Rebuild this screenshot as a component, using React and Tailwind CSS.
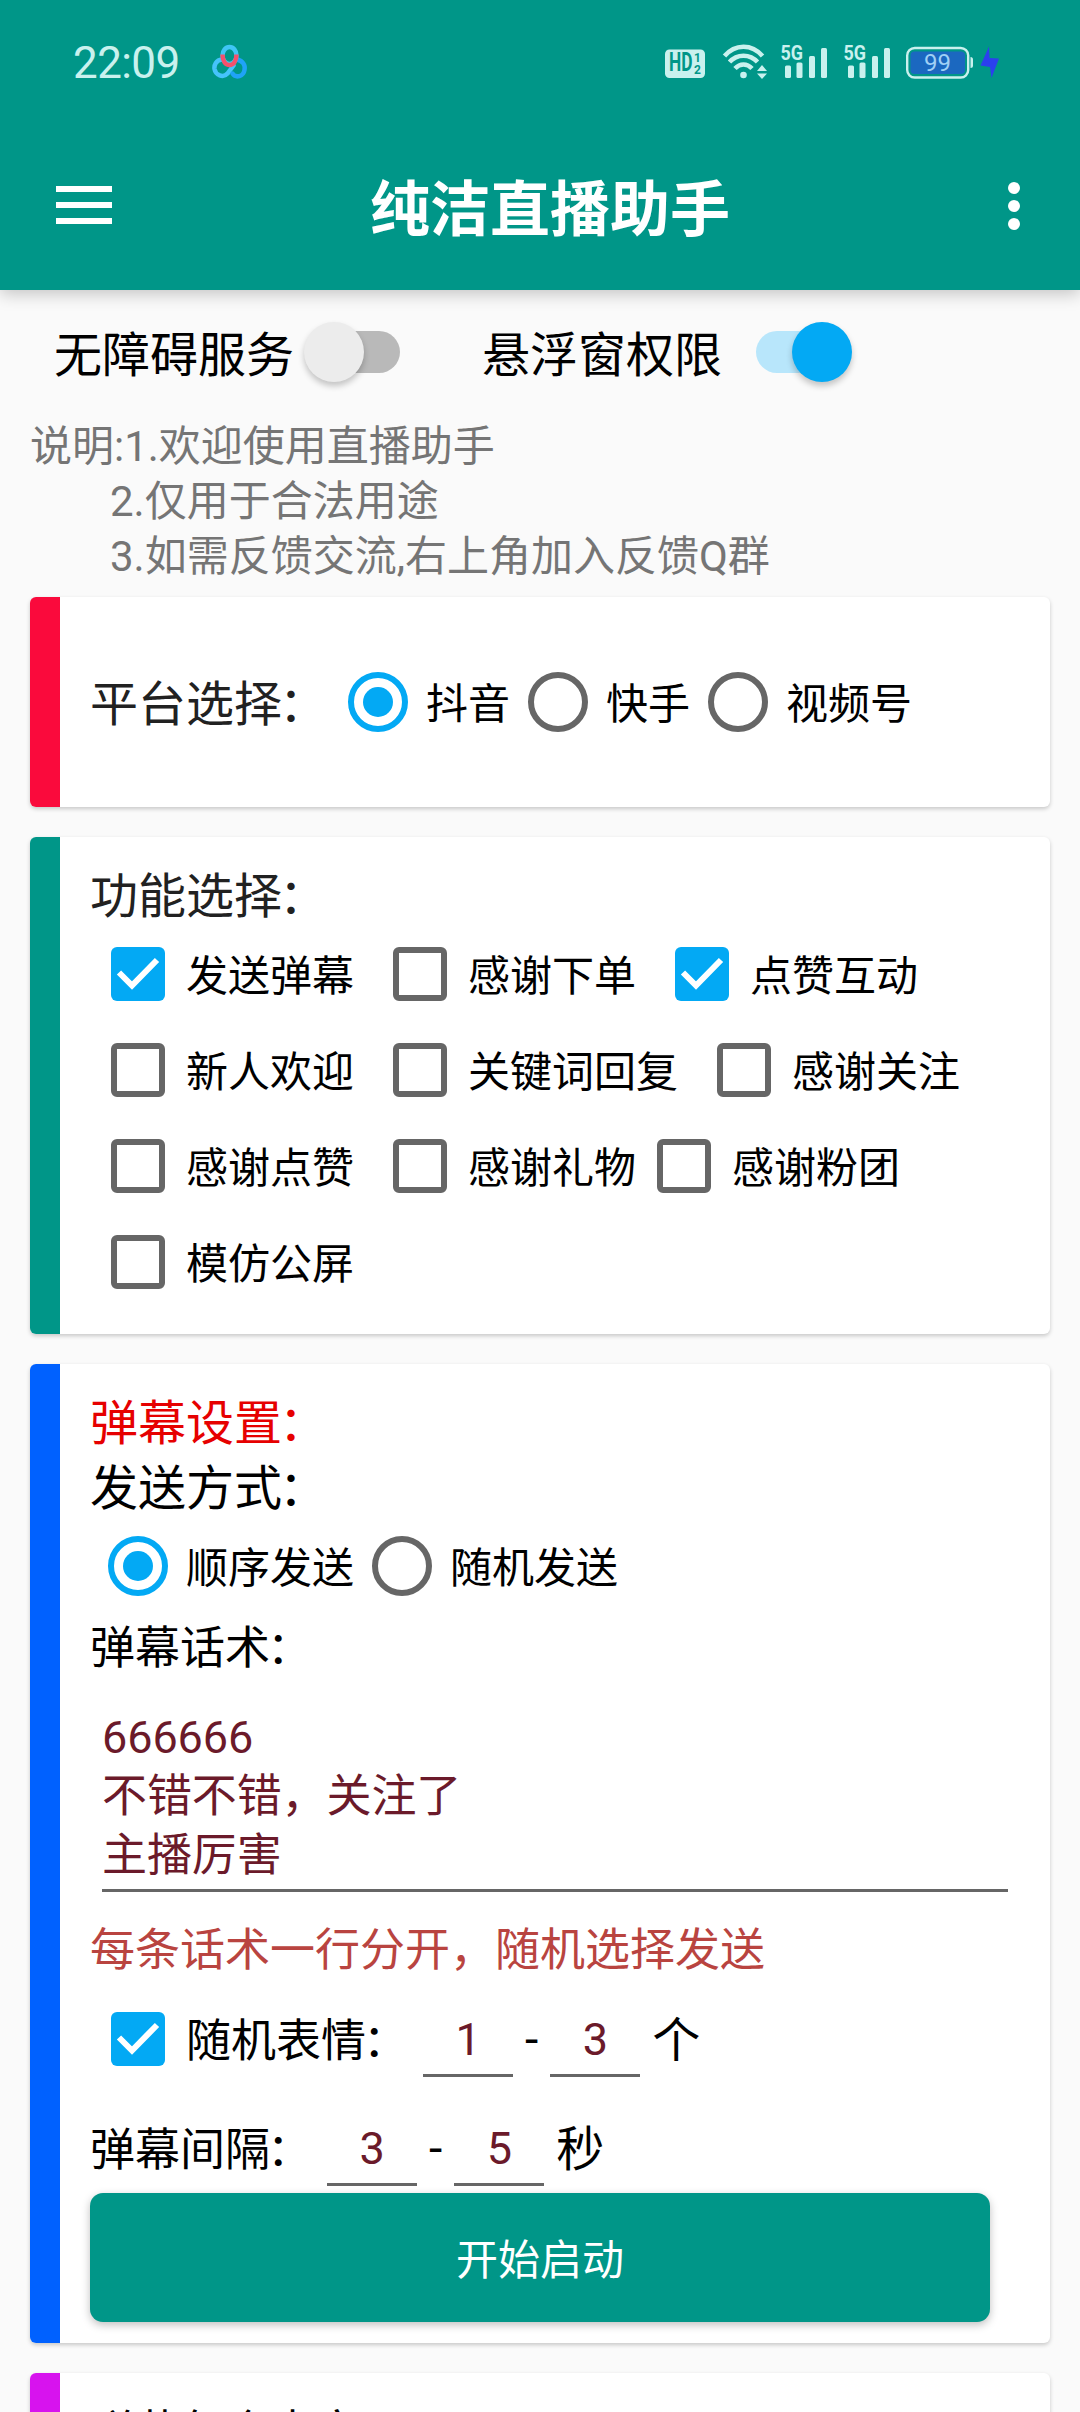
import React, { useState } from 'react';

const STATUS_COLOR = '#c9f1ee';

const features = [
  [
    { id: 'send', label: '发送弹幕' },
    { id: 'order', label: '感谢下单' },
    { id: 'like', label: '点赞互动' },
  ],
  [
    { id: 'welcome', label: '新人欢迎' },
    { id: 'keyword', label: '关键词回复' },
    { id: 'follow', label: '感谢关注' },
  ],
  [
    { id: 'thankLike', label: '感谢点赞' },
    { id: 'gift', label: '感谢礼物', tight: true },
    { id: 'fans', label: '感谢粉团' },
  ],
  [{ id: 'mimic', label: '模仿公屏' }],
];

const SignalIcon = () => (
  <svg className="w-12 h-[34px] overflow-visible" viewBox="0 0 48 34" fill={STATUS_COLOR}>
    <text x="0.5" y="15" fontSize="20.5" fontWeight="700" fontFamily="Roboto, sans-serif" textLength="22.5" lengthAdjust="spacingAndGlyphs">5G</text>
    <rect x="5" y="20.5" width="6" height="12.5" rx="1.5" />
    <rect x="16.5" y="17.5" width="6" height="15.5" rx="1.5" />
    <rect x="29" y="11" width="6" height="22" rx="1.5" />
    <rect x="41" y="3" width="6" height="30" rx="1.5" />
  </svg>
);

const StatusBar = () => (
  <div className="h-[124px] pl-[73px] pr-20 flex items-center justify-between">
    <div className="flex items-center gap-[31px]">
      <span className="text-[44px] leading-[44px] pt-[1px] w-[108px] text-[#c9f1ee] tracking-[-0.6px]">22:09</span>
      <svg className="w-9 h-9" viewBox="0 0 36 36" fill="none" strokeWidth="4.5" strokeLinecap="round">
        <path d="M10 15.5 C4 16 2 21 2.5 25 C3.500 31 11 34.500 15.500 29.500 L21.500 21.500" stroke="#45c3fb" />
        <path d="M25 15.500 C31 17 33.500 21 32.500 26 C31.500 32.500 24 34.500 20.500 29.500" stroke="#1fa3f7" />
        <ellipse cx="17.500" cy="11.500" rx="7" ry="8.500" stroke="#3fc6f5" />
        <path d="M10.500 10.500 C10.500 17 13.500 21 17.500 21 S24.500 17 24.500 10.500" stroke="#f4516c" strokeLinecap="butt" />
      </svg>
    </div>
    <div className="flex items-center">
      <svg className="w-10 h-[34px] mr-[18px]" viewBox="0 0 40 34">
        <rect x="0" y="4.500" width="40" height="28.500" rx="4.500" fill={STATUS_COLOR} />
        <g fill="#009688" fontWeight="700" fontFamily="Roboto, sans-serif">
          <text x="4" y="26" fontSize="26" textLength="23.5" lengthAdjust="spacingAndGlyphs">HD</text>
          <text x="29" y="16.500" fontSize="12">1</text>
          <text x="29" y="29" fontSize="12">2</text>
        </g>
      </svg>
      <svg className="w-11 h-[34px] mr-[13px] overflow-visible" viewBox="0 0 44 34" fill="none" stroke={STATUS_COLOR} strokeWidth="4.500">
        <path d="M1.500 11 C12 -1.500 29 -1.500 39.500 11" />
        <path d="M6.500 17 C14 8.500 27 8.500 34.500 17" />
        <path d="M12 23.500 C17 18 24 18 29 23.500" />
        <circle cx="20.500" cy="30" r="3.300" fill={STATUS_COLOR} stroke="none" />
        <path d="M34 26 L39 20 L44 26 Z M34 28.500 L39 34 L44 28.500 Z" fill={STATUS_COLOR} stroke="none" />
      </svg>
      <SignalIcon />
      <div className="w-[15px]" />
      <SignalIcon />
      <svg className="w-[67px] h-[34px] ml-[15px] mr-[7px]" viewBox="0 0 67 34">
        <rect x="1.200" y="3" width="61" height="29.500" rx="7.500" fill="none" stroke={STATUS_COLOR} strokeWidth="2.400" />
        <rect x="4.500" y="6.500" width="54.500" height="22.500" rx="4" fill="#1b68c0" />
        <path d="M64.500 12 q2.500 0 2.500 2.500 v6 q0 2.500 -2.500 2.500 z" fill={STATUS_COLOR} />
        <text x="31.500" y="26" fontSize="24" textAnchor="middle" fill="#9fd0f5" fontFamily="Roboto, sans-serif">99</text>
      </svg>
      <svg className="w-5 h-[34px]" viewBox="0 0 20 34" fill="#2b40ee">
        <path d="M9 1.500 L9.500 13 L19 13.500 L11.500 33 L10 22 L0.500 20.500 Z" />
      </svg>
    </div>
  </div>
);

// full-width colon sits slightly left inside its cell
const Colon = () => <span className="-ml-[3px] mr-[3px]">：</span>;

const Toggle = ({ on, onClick }) => (
  <button
    onClick={onClick}
    className={`relative w-24 h-[42px] flex items-center ${on ? 'justify-start' : 'justify-end'}`}
  >
    <span className={`w-[84px] h-[42px] rounded-full ${on ? 'bg-[#b8e6fb]' : 'bg-[#b9b9b9]'}`} />
    <span
      className={`absolute -top-[9px] size-[60px] rounded-full shadow-[0_4px_6px_rgba(0,0,0,0.22)] ${on ? 'right-0 bg-[#03a9f4]' : 'left-0 bg-[#ececec]'}`}
    />
  </button>
);

const Radio = ({ label, checked, onClick }) => (
  <button onClick={onClick} className="h-24 flex items-center text-black">
    <span
      className={`mx-[18px] size-[60px] rounded-full border-[6px] flex items-center justify-center ${checked ? 'border-[#03a9f4]' : 'border-[#666]'}`}
    >
      {checked && <span className="size-[30px] rounded-full bg-[#03a9f4]" />}
    </span>
    <span className="pt-[5px] text-[42px] leading-[56px]">{label}</span>
  </button>
);

const CheckBox = ({ label, checked, onClick, className = 'text-[42px]' }) => (
  <button onClick={onClick} className="h-24 flex items-center text-black">
    <span
      className={`mx-[21px] size-[54px] rounded-[6px] flex items-center justify-center ${checked ? 'bg-[#03a9f4]' : 'border-[6px] border-[#666]'}`}
    >
      {checked && (
        <svg className="size-[54px]" viewBox="0 0 54 54" fill="none" stroke="#fff" strokeWidth="6">
          <path d="M8 25.500 L21 38.500 L46 13" />
        </svg>
      )}
    </span>
    <span className={`pt-[5px] leading-[56px] ${className}`}>{label}</span>
  </button>
);

const Card = ({ bar, className = '', children }) => (
  <section className="bg-white rounded-[6px] overflow-hidden shadow-[0_2px_4px_rgba(0,0,0,0.2)] flex shrink-0">
    <div className={`w-[30px] shrink-0 ${bar}`} />
    <div className={`flex-1 pl-[30px] ${className}`}>{children}</div>
  </section>
);

const NumberInput = ({ value, onChange }) => (
  <input
    value={value}
    onChange={(e) => onChange(e.target.value)}
    className="mx-3 w-[90px] h-[76px] pt-[4px] text-center text-[45px] text-[#6b1a2a] border-b-[3px] border-[#666] outline-none"
  />
);

const Range = ({ from, to, onFrom, onTo, unit }) => (
  <div className="flex items-center text-[48px] leading-[64px] text-black">
    <NumberInput value={from} onChange={onFrom} />
    <span className="pt-[2px]">-</span>
    <NumberInput value={to} onChange={onTo} />
    <span className="pt-[4px]">{unit}</span>
  </div>
);

const App = () => {
  const [accessibility, setAccessibility] = useState(false);
  const [overlay, setOverlay] = useState(true);
  const [platform, setPlatform] = useState('抖音');
  const [mode, setMode] = useState('顺序发送');
  const [enabled, setEnabled] = useState({ send: true, like: true });
  const [emoji, setEmoji] = useState(true);
  const [words, setWords] = useState('666666\n不错不错，关注了\n主播厉害');
  const [range, setRange] = useState({ emojiMin: '1', emojiMax: '3', gapMin: '3', gapMax: '5' });

  const toggleFeature = (id) => setEnabled({ ...enabled, [id]: !enabled[id] });

  return (
    <div className="w-[1080px] h-[2412px] overflow-hidden bg-[#fafafa] font-['Roboto','Noto_Sans_CJK_SC',sans-serif] flex flex-col">
      <header className="h-[290px] shrink-0 bg-[#009688] shadow-[0_4px_16px_rgba(0,0,0,0.22)]">
        <StatusBar />
        <div className="h-[162px] pl-14 pr-[60px] flex items-center">
          <button className="flex flex-col gap-[10px]">
            <span className="w-14 h-[6px] bg-white" />
            <span className="w-14 h-[6px] bg-white" />
            <span className="w-14 h-[6px] bg-white" />
          </button>
          <h1 className="ml-[258px] mr-auto pt-[11px] text-[60px] leading-[80px] font-bold text-white">纯洁直播助手</h1>
          <button className="w-[12px] flex flex-col gap-[6px] pt-[2px]">
            <span className="size-3 rounded-full bg-white" />
            <span className="size-3 rounded-full bg-white" />
            <span className="size-3 rounded-full bg-white" />
          </button>
        </div>
      </header>

      <div className="h-[124px] shrink-0 pl-[54px] flex items-center text-[48px] leading-[64px] text-black">
        <span className="mr-[10px] pt-[8px]">无障碍服务</span>
        <Toggle on={accessibility} onClick={() => setAccessibility(!accessibility)} />
        <span className="ml-[82px] mr-[34px] pt-[8px]">悬浮窗权限</span>
        <Toggle on={overlay} onClick={() => setOverlay(!overlay)} />
      </div>

      <div className="h-[183px] shrink-0 pt-[5px] pl-[30px] text-[42px] leading-[55px] text-[#757575]">
        <p>说明:1.欢迎使用直播助手</p>
        <p className="pl-[80px]">2.仅用于合法用途</p>
        <p className="pl-[80px]">3.如需反馈交流,右上角加入反馈Q群</p>
      </div>

      <main className="px-[30px] flex flex-col gap-[30px]">
        <Card bar="bg-[#fa0a3c]" className="h-[210px] flex items-center">
          <span className="pt-[5px] text-[48px] leading-[64px] text-[#212121]">平台选择<Colon /></span>
          {['抖音', '快手', '视频号'].map((name) => (
            <Radio key={name} label={name} checked={platform === name} onClick={() => setPlatform(name)} />
          ))}
        </Card>

        <Card bar="bg-[#009688]" className="h-[497px] pt-[28px]">
          <h2 className="h-[61px] text-[48px] leading-[64px] text-[#212121]">功能选择<Colon /></h2>
          {features.map((row, i) => (
            <div key={i} className="flex">
              {row.map((item) => (
                <div key={item.id} className={item.tight ? '' : 'mr-[18px]'}>
                  <CheckBox label={item.label} checked={!!enabled[item.id]} onClick={() => toggleFeature(item.id)} />
                </div>
              ))}
            </div>
          ))}
        </Card>

        <Card bar="bg-[#0061ff]" className="h-[979px] pt-[28px] text-black">
          <h2 className="text-[48px] leading-[64px] text-[#e60000]">弹幕设置<Colon /></h2>
          <h3 className="h-[62px] pt-[1px] text-[48px] leading-[64px]">发送方式<Colon /></h3>
          <div className="flex">
            {['顺序发送', '随机发送'].map((name) => (
              <Radio key={name} label={name} checked={mode === name} onClick={() => setMode(name)} />
            ))}
          </div>
          <h3 className="h-[91px] pt-[3px] text-[45px] leading-[64px]">弹幕话术<Colon /></h3>
          <textarea
            value={words}
            onChange={(e) => setWords(e.target.value)}
            className="block ml-3 w-[906px] h-[187px] pt-[3px] text-[45px] leading-[59px] tracking-[-0.1px] text-[#6b1a2a] border-b-[3px] border-[#666] outline-none resize-none overflow-hidden"
          />
          <p className="h-[99px] pt-[27px] text-[45px] leading-[64px] text-[#b94440]">每条话术一行分开，随机选择发送</p>
          <div className="h-24 flex items-center">
            <CheckBox
              label={<>随机表情<Colon /></>}
              checked={emoji}
              onClick={() => setEmoji(!emoji)}
              className="text-[45px]"
            />
            <Range
              from={range.emojiMin}
              to={range.emojiMax}
              onFrom={(v) => setRange({ ...range, emojiMin: v })}
              onTo={(v) => setRange({ ...range, emojiMax: v })}
              unit="个"
            />
          </div>
          <div className="h-[106px] pt-[16px] flex items-center">
            <span className="pt-[6px] text-[45px] leading-[64px]">弹幕间隔<Colon /></span>
            <Range
              from={range.gapMin}
              to={range.gapMax}
              onFrom={(v) => setRange({ ...range, gapMin: v })}
              onTo={(v) => setRange({ ...range, gapMax: v })}
              unit="秒"
            />
          </div>
          <button className="block w-[900px] h-[129px] pt-[6px] rounded-[13px] bg-[#009688] text-white text-[42px] leading-[56px] shadow-[0_3px_8px_rgba(0,0,0,0.25)]">
            开始启动
          </button>
        </Card>

        <Card bar="bg-[#d713ee]" className="h-[300px] pt-[28px] text-black">
          <h2 className="text-[45px] leading-[64px]">弹幕包含内容<Colon /></h2>
        </Card>
      </main>
    </div>
  );
};

export default App;
